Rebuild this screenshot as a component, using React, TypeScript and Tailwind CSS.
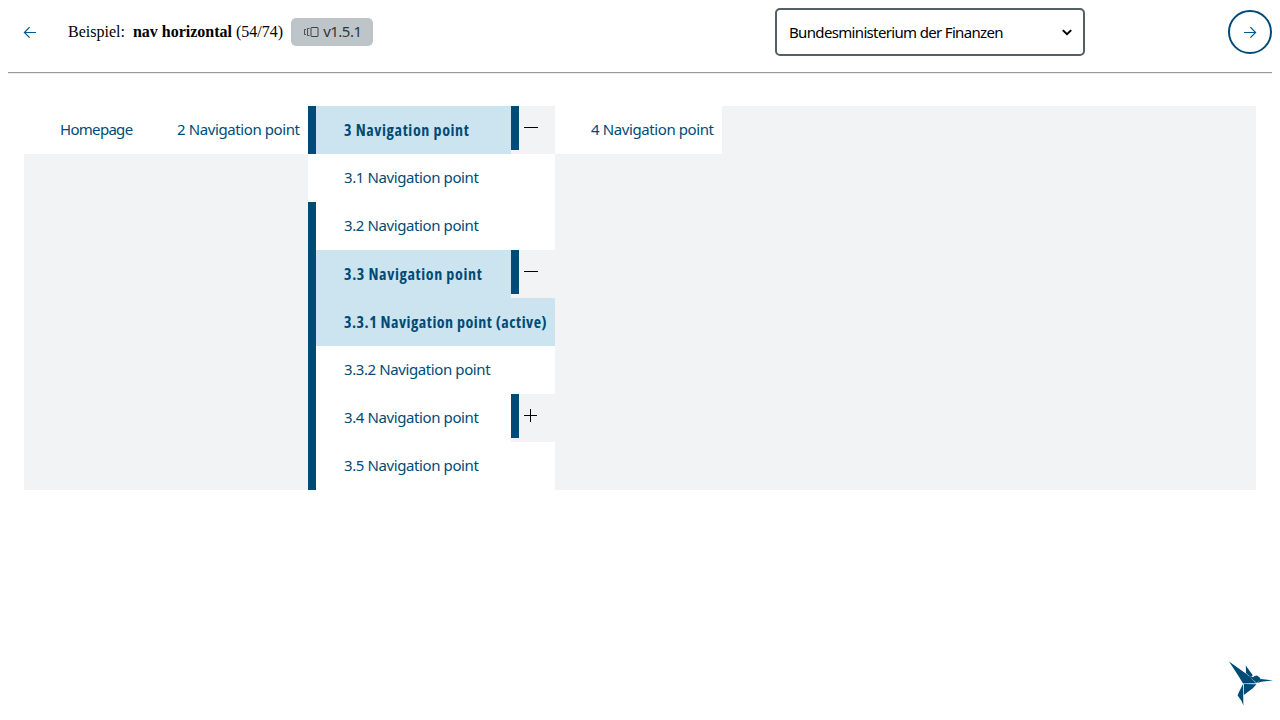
import React from "react";

const LABEL = "font-['Noto_Sans',sans-serif] text-[15px] whitespace-nowrap";
const BOLD_LABEL =
  "font-['Open_Sans',sans-serif] text-[16px] font-bold font-stretch-semi-condensed whitespace-nowrap";

type Kind = "plain" | "trail" | "active";

interface ItemProps {
  label: string;
  kind?: Kind;
  bar?: boolean;
  toggle?: "plus" | "minus";
}

function Toggle({ type }: { type: "plus" | "minus" }) {
  return (
    <button className="flex h-12 w-11 shrink-0 items-start bg-[#f2f3f4]" aria-label={type}>
      <span className="h-11 w-2 bg-[#004b76]" />
      <svg className="mt-[14px] ml-[5px]" width="15" height="16" shapeRendering="crispEdges">
        {type === "minus" ? (
          <rect x="0" y="7" width="14" height="1" />
        ) : (
          <>
            <rect x="0" y="7" width="13" height="1" />
            <rect x="6" y="1" width="1" height="13" />
          </>
        )}
      </svg>
    </button>
  );
}

function Item({ label, kind = "plain", bar = true, toggle }: ItemProps) {
  return (
    <li className="flex h-12">
      <span className={bar ? "w-2 bg-[#004b76]" : "w-2 bg-white"} />
      <a
        className={`flex flex-1 items-center pl-7 text-[#004b76] ${
          kind === "plain"
            ? `${LABEL} bg-white pb-px tracking-[-0.4px]`
            : `${BOLD_LABEL} bg-[#cce4ef] ${
                kind === "active" ? "tracking-[0.51px]" : "tracking-[0.64px]"
              }`
        }`}
      >
        {label}
      </a>
      {toggle && <Toggle type={toggle} />}
    </li>
  );
}

function Arrow({ right = false }: { right?: boolean }) {
  return (
    <svg
      width="14"
      height="12"
      viewBox="0 0 14 12"
      fill="none"
      stroke="#00598c"
      strokeWidth="1.2"
    >
      {right ? (
        <path d="M1 6.5H12.4M7.4 1.2L12.6 6.5L7.4 11.6" />
      ) : (
        <path d="M13 6.5H1.6M6.6 1.2L1.4 6.5L6.6 11.6" />
      )}
    </svg>
  );
}

export default function App() {
  return (
    <div className="flex h-[720px] flex-col bg-white">
      <header className="mx-2 flex h-[74px] items-start border-b border-b-[#ececec] pt-2">
        <div className="flex h-12 w-[44px] items-center justify-center">
          <Arrow />
        </div>
        <p className="ml-4 flex h-12 items-center font-['Liberation_Serif',serif] text-base whitespace-pre text-black">
          Beispiel:{"  "}
          <b>nav horizontal</b> (54/74)
        </p>
        <span className="mt-[10px] ml-2 flex h-7 w-[82px] items-center rounded-[5px] bg-[#bec5c9] pl-[13px] text-[#2f3538]">
          <svg width="15" height="12" viewBox="0 0 15 12" fill="none" stroke="currentColor">
            <path d="M2 3.5H.5V8.5H2M5.5 2.5H3.5V9.5H5.5" strokeWidth=".8" />
            <rect x="7" y="1.5" width="7" height="9" rx=".5" strokeWidth=".9" />
          </svg>
          <span className={`${LABEL} ml-1 pb-px tracking-[-0.5px]`}>v1.5.1</span>
        </span>
        <button className="ml-auto flex h-12 w-[310px] items-center justify-between rounded-[5px] border-2 border-[#535f63] pr-[11px] pl-3 text-black">
          <span className={`${LABEL} tracking-[-0.66px]`}>Bundesministerium der Finanzen</span>
          <svg width="10" height="7" viewBox="0 0 10 7" fill="none" stroke="black" strokeWidth="2">
            <path d="M.8 1.1L5 5.2L9.2 1.1" />
          </svg>
        </button>
        <button className="mt-[2px] ml-[143px] flex size-11 items-center justify-center rounded-full border-2 border-[#004b76]">
          <Arrow right />
        </button>
      </header>
      <div className="-mt-[2px] mx-2 h-px bg-[#9a9a9a]" />

      <nav className="mx-6 mt-[33px] h-96 bg-[#f2f3f4]">
        <ul className="flex items-start">
          <li className="flex h-12 w-[117px] items-center bg-white pb-px pl-9 text-[#004b76]">
            <a className={`${LABEL} tracking-[-0.7px]`}>Homepage</a>
          </li>
          <li className="flex h-12 w-[167px] items-center bg-white pb-px pl-9 text-[#004b76]">
            <a className={`${LABEL} tracking-[-0.4px]`}>2 Navigation point</a>
          </li>
          <li className="w-[247px]">
            <ul>
              <Item label="3 Navigation point" kind="trail" toggle="minus" />
              <Item label="3.1 Navigation point" bar={false} />
              <Item label="3.2 Navigation point" />
              <Item label="3.3 Navigation point" kind="trail" toggle="minus" />
              <Item label="3.3.1 Navigation point (active)" kind="active" />
              <Item label="3.3.2 Navigation point" />
              <Item label="3.4 Navigation point" toggle="plus" />
              <Item label="3.5 Navigation point" />
            </ul>
          </li>
          <li className="flex h-12 w-[167px] items-center bg-white pb-px pl-9 text-[#004b76]">
            <a className={`${LABEL} tracking-[-0.4px]`}>4 Navigation point</a>
          </li>
        </ul>
      </nav>

      <footer className="mt-auto mr-[7px] mb-[14px] flex justify-end">
        <svg width="44" height="45" viewBox="0 0 44 45" fill="#004b76">
          <path d="M0 .5L17.5 13L26 21L27.5 22.3L14 22.4L9.5 15Z" />
          <path d="M16.8 4.5L23.8 14.3L22 16L19 14L17 12Z" />
          <path d="M18.6 14.5L24 16.3L25.5 15L28 14.6L31 16.7L31.5 18.8L27.8 22L25.8 20.2Z" />
          <path d="M31.6 18L44 19.4L32.5 20.7L28.4 22Z" />
          <path d="M14.8 23L27.5 23.2L23.5 27.5L14.8 34Z" />
          <path d="M14 23L14.4 44.5L12.6 40L8.6 34.5L10 31Z" />
        </svg>
      </footer>
    </div>
  );
}
